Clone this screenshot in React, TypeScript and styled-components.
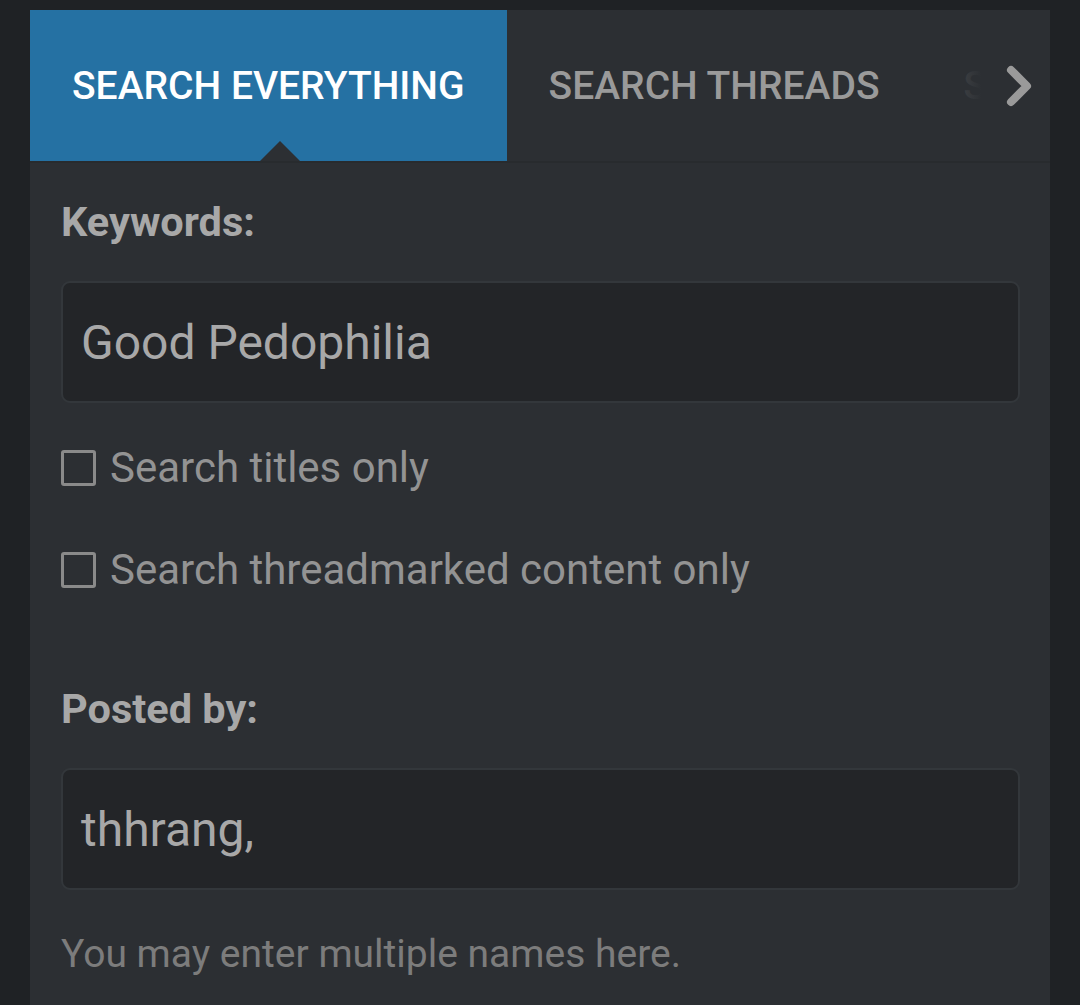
import React from "react";
import styled, { createGlobalStyle } from "styled-components";

const Global = createGlobalStyle`
  html, body { margin: 0; padding: 0; background: #1f2225; }
  body { font-family: Roboto, "Noto Sans", "Liberation Sans", sans-serif; }
  * { box-sizing: border-box; }
`;

const Page = styled.div`
  min-height: 1005px;
  padding: 10px 30px 0 30px;
  display: flex;
`;

const Panel = styled.div`
  width: 1020px;
  min-height: 995px;
  background: #2c2f33;
  display: flex;
  flex-direction: column;
`;

const TabBar = styled.div`
  position: relative;
  height: 153px;
  display: flex;
  border-bottom: 2px solid #282b2e;
  overflow: hidden;
`;

const Tab = styled.div<{ $active?: boolean }>`
  position: relative;
  flex: none;
  display: flex;
  align-items: center;
  height: 151px;
  padding: 0 42px;
  font-size: 39px;
  font-weight: 500;
  white-space: nowrap;
  color: ${(p) => (p.$active ? "#ffffff" : "#9a9a9a")};
  background: ${(p) => (p.$active ? "#2571a3" : "transparent")};
  &::after {
    content: "";
    display: ${(p) => (p.$active ? "block" : "none")};
    position: absolute;
    left: 230px;
    bottom: 0;
    border-left: 20px solid transparent;
    border-right: 20px solid transparent;
    border-bottom: 20px solid #2c2f33;
  }
`;

const ClippedTab = styled(Tab)`
  flex: 1 1 auto;
  min-width: 0;
  overflow: hidden;
  padding-right: 0;
`;

const Fade = styled.div`
  position: absolute;
  top: 0;
  right: 0;
  width: 88px;
  height: 151px;
  background: linear-gradient(to right, rgba(44, 47, 51, 0.85) 0%, #2c2f33 22%);
  display: flex;
  align-items: center;
  justify-content: flex-end;
  padding-right: 14px;
`;

const Body = styled.div`
  padding: 36px 30px 0 31px;
  display: flex;
  flex-direction: column;
`;

const Label = styled.div<{ $top?: number }>`
  font-size: 41.5px;
  font-weight: 700;
  color: #a8a8a8;
  line-height: 46px;
  margin-top: ${(p) => p.$top ?? 0}px;
`;

const Input = styled.div`
  margin-top: 36px;
  height: 122px;
  border: 2px solid #33373b;
  background: #232528;
  border-radius: 9px;
  display: flex;
  align-items: center;
  padding: 0 18px;
  font-size: 48px;
  color: #a8a8a8;
`;

const CheckRow = styled.label<{ $top: number }>`
  display: flex;
  align-items: center;
  gap: 14px;
  margin-top: ${(p) => p.$top}px;
  font-size: 42px;
  color: #939393;
  line-height: 50px;
`;

const Box = styled.span`
  width: 35px;
  height: 36px;
  border: 3px solid #8a8a8a;
  border-radius: 3px;
  flex: none;
`;

const Help = styled.div`
  margin-top: 39px;
  font-size: 39px;
  color: #7c7c7c;
  line-height: 50px;
`;

export default function App() {
  return (
    <>
      <Global />
      <Page>
        <Panel>
          <TabBar>
            <Tab $active>SEARCH EVERYTHING</Tab>
            <Tab>SEARCH THREADS</Tab>
            <ClippedTab>SEARCH PROFILE POSTS</ClippedTab>
            <Fade>
              <svg width="34" height="48" viewBox="0 0 34 48">
                <path
                  d="M9 8 L25 24 L9 40"
                  fill="none"
                  stroke="#9a9a9a"
                  strokeWidth="8"
                  strokeLinecap="round"
                  strokeLinejoin="round"
                />
              </svg>
            </Fade>
          </TabBar>
          <Body>
            <Label>Keywords:</Label>
            <Input>Good Pedophilia</Input>
            <CheckRow $top={40}>
              <Box />
              Search titles only
            </CheckRow>
            <CheckRow $top={52}>
              <Box />
              Search threadmarked content only
            </CheckRow>
            <Label $top={91}>Posted by:</Label>
            <Input>thhrang,</Input>
            <Help>You may enter multiple names here.</Help>
          </Body>
        </Panel>
      </Page>
    </>
  );
}
